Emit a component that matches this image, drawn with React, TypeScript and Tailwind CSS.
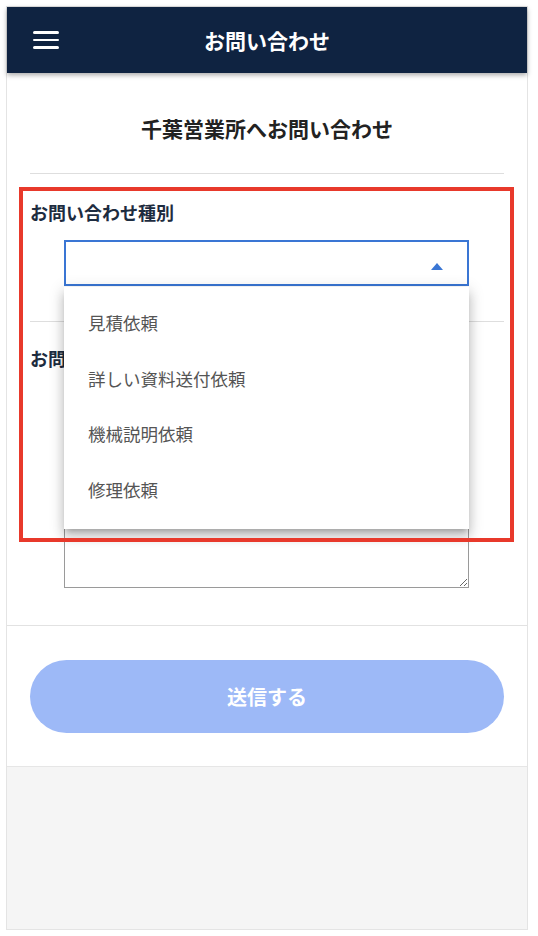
import React from "react";

const font = { fontFamily: '"Noto Sans CJK JP", "Noto Sans", sans-serif' };

export default function App() {
  const items = ["見積依頼", "詳しい資料送付依頼", "機械説明依頼", "修理依頼"];
  return (
    <div className="relative w-[538px] h-[936px] bg-white pl-[6px] pr-[10px] pt-[6px] pb-[6px]" style={font}>
      <div className="flex flex-col h-[924px] border border-[#e4e4e4] bg-[#f5f5f5]">
        {/* header */}
        <div className="relative z-10 flex items-center h-[66px] bg-[#0f2341] shadow-[0_2px_5px_rgba(0,0,0,0.35)] shrink-0">
          <div className="absolute left-[26px] top-[24px] flex flex-col gap-[5px]">
            <span className="block w-[26px] h-[2.5px] bg-white rounded-sm" />
            <span className="block w-[26px] h-[2.5px] bg-white rounded-sm" />
            <span className="block w-[26px] h-[2.5px] bg-white rounded-sm" />
          </div>
          <div className="w-full text-center text-white text-[21px] font-bold leading-[30px]">お問い合わせ</div>
        </div>

        {/* content */}
        <div className="bg-white border-b border-[#e6e6e6]">
          <div className="px-[23px] pt-[40px]">
            <div className="text-center text-[21px] font-bold text-[#222] leading-[30px]">千葉営業所へお問い合わせ</div>
            <div className="mt-[30px] h-px bg-[#dedede]" />
            <div className="mt-[25px] text-[18px] font-bold text-[#1d2c40] leading-[26px]">お問い合わせ種別</div>
            <div className="relative mt-[15px] ml-[34px] w-[405px]">
              <div className="flex items-center justify-end h-[46px] border-2 border-[#3a76d4] pr-[24px] pt-[6px]">
                <svg width="12" height="7" viewBox="0 0 12 7">
                  <path d="M0 7 L6 0 L12 7 Z" fill="#3a76d4" />
                </svg>
              </div>
              <div className="absolute left-0 top-[47px] z-20 w-[405px] bg-white pt-[8px] pb-[12px] shadow-[0_5px_5px_-3px_rgba(0,0,0,0.2),0_8px_10px_1px_rgba(0,0,0,0.14),0_3px_14px_2px_rgba(0,0,0,0.12)]">
                {items.map((t) => (
                  <div key={t} className="flex items-center h-[55.5px] pl-[24px] text-[17.5px] text-[#555] leading-none">
                    {t}
                  </div>
                ))}
              </div>
            </div>
            <div className="mt-[35px] h-px bg-[#dedede]" />
            <div className="mt-[23px] text-[18px] font-bold text-[#1d2c40] leading-[26px]">お問い合わせ内容</div>
            <div className="mt-[15px] ml-[34px] w-[405px]">
              <textarea readOnly className="block w-[405px] h-[202px] border border-[#9a9a9a] bg-white" />
            </div>
          </div>
          <div className="mt-[37px] h-px bg-[#e2e2e2]" />
          <div className="px-[23px] pt-[34px] pb-[33px]">
            <div className="flex items-center justify-center h-[73px] rounded-full bg-[#9db9f7] text-white text-[20px] font-bold">
              送信する
            </div>
          </div>
        </div>
        <div className="flex-1 bg-[#f5f5f5]" />
      </div>

      {/* red annotation frame */}
      <div className="absolute left-[19px] top-[187px] w-[495px] h-[355px] border-[4px] border-[#e8392b] z-30 pointer-events-none" />
    </div>
  );
}
